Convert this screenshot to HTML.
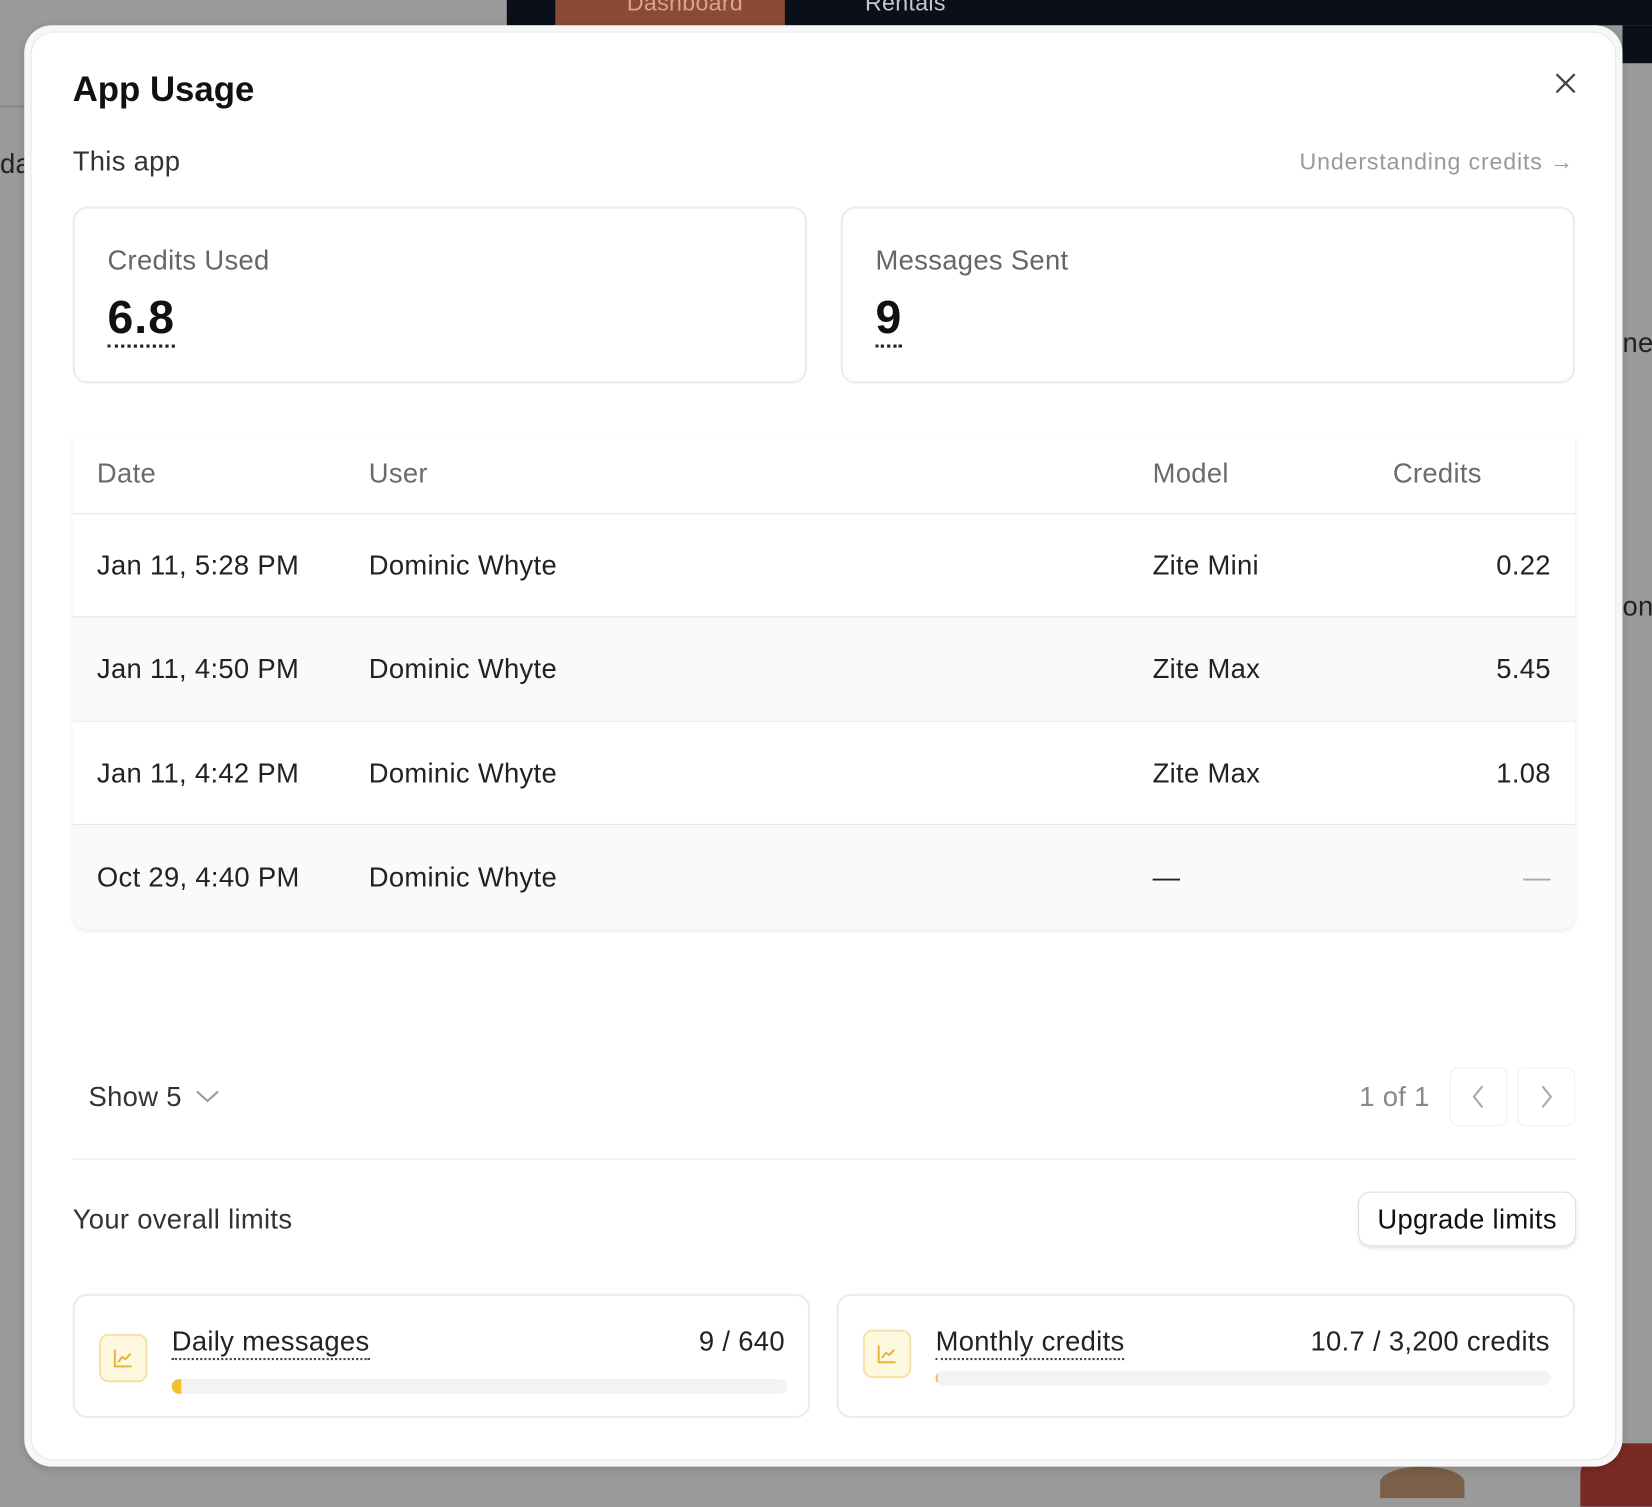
<!DOCTYPE html>
<html><head><meta charset="utf-8"><style>
*{box-sizing:border-box;margin:0;padding:0}
html,body{width:1652px;height:1492px;overflow:hidden;background:#9a9a9a;font-family:"Liberation Sans",Arial,sans-serif}
#w{position:absolute;left:0;top:0;width:1568px;height:1417px;transform:scale(1.05357);transform-origin:0 0;letter-spacing:0.3px}
.a{position:absolute}
.t{position:absolute;white-space:nowrap}
.dot{border-bottom:3px dotted #222;padding-bottom:1px}
.dotl{border-bottom:2px dotted #444}
.row{position:absolute;left:0;right:0;height:99px;border-top:1px solid #e6e6e6}
.row .t{top:50%;transform:translateY(-50%);font-size:26px;color:#222}
</style></head><body><div id="w">
<div class="a" style="left:481px;top:0;width:1087px;height:24px;background:#0b0f1a"></div>
<div class="a" style="left:1540px;top:24px;width:28px;height:36px;background:#0b0f1a"></div>
<div class="a" style="left:527px;top:0;width:218px;height:24px;background:#8a4a35"></div>
<div class="t" style="left:595px;top:-10px;font-size:22px;color:#d9a58e">Dashboard</div>
<div class="t" style="left:821px;top:-10px;font-size:22px;color:#c8c8c8">Rentals</div>
<div class="a" style="left:0;top:100px;width:23px;height:2px;background:#8a8a8a"></div>
<div class="t" style="left:0;top:140px;font-size:26px;color:#222">da</div>
<div class="t" style="left:1540px;top:310px;font-size:26px;color:#222">ne</div>
<div class="t" style="left:1540px;top:560px;font-size:26px;color:#222">on</div>
<div class="a" style="left:1310px;top:1392px;width:80px;height:30px;border-radius:50% 50% 0 0;background:#7a6048"></div>
<div class="a" style="left:1500px;top:1370px;width:80px;height:60px;border-radius:50% 0 0 0;background:#7a2a24"></div>

<div class="a" style="left:23px;top:24px;width:1517px;height:1368px;background:#f7f7f7;border-radius:26px;box-shadow:0 2px 8px rgba(0,0,0,.15)">
<div class="a" style="left:6px;top:6px;right:6px;bottom:6px;background:#fff;border:1px solid #e8e8e8;border-radius:22px"></div>
</div>

<div class="t" style="left:69px;top:66px;font-size:33px;font-weight:700;color:#111;letter-spacing:0">App Usage</div>
<svg class="a" style="left:1476px;top:69px" width="20" height="20" viewBox="0 0 20 20"><path d="M2 2L18 18M18 2L2 18" stroke="#444" stroke-width="2.2" stroke-linecap="round"/></svg>
<div class="t" style="left:69px;top:138px;font-size:26px;color:#333">This app</div>
<div class="t" style="right:74px;top:141px;font-size:22px;color:#999;letter-spacing:0.8px">Understanding credits →</div>

<div class="a" style="left:69px;top:196px;width:697px;height:168px;border:2px solid #ececec;border-radius:14px">
<div class="t" style="left:31px;top:34px;font-size:26px;color:#666">Credits Used</div>
<div class="t dot" style="left:31px;top:80px;font-size:44px;font-weight:700;color:#111;line-height:48px;letter-spacing:1px">6.8</div></div>
<div class="a" style="left:798px;top:196px;width:697px;height:168px;border:2px solid #ececec;border-radius:14px">
<div class="t" style="left:31px;top:34px;font-size:26px;color:#666">Messages Sent</div>
<div class="t dot" style="left:31px;top:80px;font-size:44px;font-weight:700;color:#111;line-height:48px">9</div></div>

<div class="a" style="left:69px;top:412px;width:1426px;height:470px;border-radius:0 0 14px 14px;box-shadow:0 2px 4px rgba(0,0,0,.08);overflow:hidden;background:#fff">
<div class="t" style="left:23px;top:22px;font-size:26px;color:#6b6b6b">Date</div>
<div class="t" style="left:281px;top:22px;font-size:26px;color:#6b6b6b">User</div>
<div class="t" style="left:1025px;top:22px;font-size:26px;color:#6b6b6b">Model</div>
<div class="t" style="left:1253px;top:22px;font-size:26px;color:#6b6b6b">Credits</div>
<div class="row" style="top:75px"><div class="t" style="left:23px">Jan 11, 5:28 PM</div><div class="t" style="left:281px">Dominic Whyte</div><div class="t" style="left:1025px">Zite Mini</div><div class="t" style="right:23px">0.22</div></div>
<div class="row" style="top:173px;background:#fafafa"><div class="t" style="left:23px">Jan 11, 4:50 PM</div><div class="t" style="left:281px">Dominic Whyte</div><div class="t" style="left:1025px">Zite Max</div><div class="t" style="right:23px">5.45</div></div>
<div class="row" style="top:272px"><div class="t" style="left:23px">Jan 11, 4:42 PM</div><div class="t" style="left:281px">Dominic Whyte</div><div class="t" style="left:1025px">Zite Max</div><div class="t" style="right:23px">1.08</div></div>
<div class="row" style="top:370px;height:100px;background:#fafafa"><div class="t" style="left:23px">Oct 29, 4:40 PM</div><div class="t" style="left:281px">Dominic Whyte</div><div class="t" style="left:1025px">—</div><div class="t" style="right:23px;color:#aaa">—</div></div>
</div>

<div class="t" style="left:84px;top:1026px;font-size:26px;color:#333">Show 5</div>
<svg class="a" style="left:185px;top:1034px" width="24" height="14" viewBox="0 0 24 14"><path d="M2 2L12 11L22 2" stroke="#999" stroke-width="2" fill="none"/></svg>
<div class="t" style="right:211px;top:1026px;font-size:26px;color:#888">1 of 1</div>
<div class="a" style="left:1376px;top:1013px;width:55px;height:56px;border:1px solid #f0f0f0;border-radius:8px"></div>
<div class="a" style="left:1440px;top:1013px;width:55px;height:56px;border:1px solid #f0f0f0;border-radius:8px"></div>
<svg class="a" style="left:1396px;top:1029px" width="14" height="24" viewBox="0 0 14 24"><path d="M11 2L3 12L11 22" stroke="#aaa" stroke-width="2" fill="none"/></svg>
<svg class="a" style="left:1461px;top:1029px" width="14" height="24" viewBox="0 0 14 24"><path d="M3 2L11 12L3 22" stroke="#aaa" stroke-width="2" fill="none"/></svg>

<div class="a" style="left:69px;top:1099px;width:1426px;height:2px;background:#f2f2f2"></div>
<div class="t" style="left:69px;top:1142px;font-size:26px;color:#333">Your overall limits</div>
<div class="a" style="left:1289px;top:1131px;width:207px;height:52px;border:1px solid #ddd;border-radius:12px;box-shadow:0 2px 3px rgba(0,0,0,.1);font-size:26px;color:#111;text-align:center;line-height:50px">Upgrade limits</div>

<div class="a" style="left:69px;top:1228px;width:700px;height:118px;border:2px solid #ececec;border-radius:14px">
<div class="a" style="left:23px;top:36px;width:46px;height:46px;background:#fff8e1;border:2px solid #f6e2a6;border-radius:9px"><svg style="position:absolute;left:11px;top:11px" width="20" height="20" viewBox="0 0 20 20"><path d="M2 2V18H18M5 14L9 9L12 11L17 6" stroke="#e2b23a" stroke-width="1.8" fill="none"/></svg></div>
<div class="t dotl" style="left:92px;top:28px;font-size:26px;color:#222">Daily messages</div>
<div class="t" style="right:22px;top:28px;font-size:26px;color:#222">9 / 640</div>
<div class="a" style="left:92px;top:79px;width:584px;height:14px;background:#f3f3f3;border-radius:7px;overflow:hidden"><div style="width:9px;height:14px;background:#f2c12e"></div></div>
</div>
<div class="a" style="left:794px;top:1228px;width:701px;height:118px;border:2px solid #ececec;border-radius:14px">
<div class="a" style="left:23px;top:32px;width:46px;height:46px;background:#fff8e1;border:2px solid #f6e2a6;border-radius:9px"><svg style="position:absolute;left:11px;top:11px" width="20" height="20" viewBox="0 0 20 20"><path d="M2 2V18H18M5 14L9 9L12 11L17 6" stroke="#e2b23a" stroke-width="1.8" fill="none"/></svg></div>
<div class="t dotl" style="left:92px;top:28px;font-size:26px;color:#222">Monthly credits</div>
<div class="t" style="right:22px;top:28px;font-size:26px;color:#222">10.7 / 3,200 credits</div>
<div class="a" style="left:92px;top:71px;width:584px;height:14px;background:#f3f3f3;border-radius:7px;overflow:hidden"><div style="width:2px;height:14px;background:#f2c12e"></div></div>
</div>
</div></body></html>
